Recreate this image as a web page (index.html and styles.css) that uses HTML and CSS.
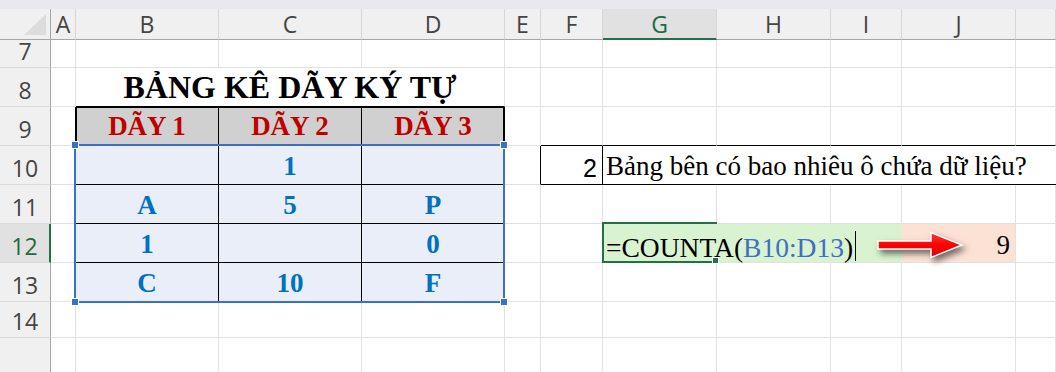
FILE: index.html
```html
<!DOCTYPE html>
<html lang="vi">
<head>
<meta charset="utf-8">
<title>COUNTA</title>
<link rel="stylesheet" href="styles.css">
</head>
<body>
<div class="topbar"></div>
<div class="sheet">
  <div class="corner"><span class="tri"></span></div>
  <div class="ch">A</div><div class="ch">B</div><div class="ch">C</div><div class="ch">D</div><div class="ch">E</div><div class="ch">F</div><div class="ch sel">G</div><div class="ch">H</div><div class="ch">I</div><div class="ch">J</div><div class="ch"></div>

  <div class="rh">7</div>
  <div class="c"></div><div class="c"></div><div class="c"></div><div class="c"></div><div class="c"></div><div class="c"></div><div class="c"></div><div class="c"></div><div class="c"></div><div class="c"></div><div class="c"></div>

  <div class="rh">8</div>
  <div class="c"></div>
  <div class="c title">BẢNG KÊ DÃY KÝ TỰ</div>
  <div class="c"></div><div class="c"></div><div class="c"></div><div class="c"></div><div class="c"></div><div class="c"></div><div class="c"></div>

  <div class="rh">9</div>
  <div class="c a9"></div>
  <div class="tbl">
    <div class="th first">DÃY 1</div><div class="th">DÃY 2</div><div class="th last">DÃY 3</div>
    <div class="td"></div><div class="td">1</div><div class="td"></div>
    <div class="td">A</div><div class="td">5</div><div class="td">P</div>
    <div class="td">1</div><div class="td"></div><div class="td">0</div>
    <div class="td">C</div><div class="td">10</div><div class="td">F</div>
    <div class="selbox"><i class="h tl"></i><i class="h tr"></i><i class="h bl"></i><i class="h br"></i></div>
  </div>
  <div class="c"></div>
  <div class="c bb"></div><div class="c bb"></div><div class="c bb"></div><div class="c bb"></div><div class="c bb"></div><div class="c bb"></div>

  <div class="rh">10</div>
  <div class="c"></div>
  <div class="c e10"></div>
  <div class="c f10">2</div>
  <div class="c q">Bảng bên có bao nhiêu ô chứa dữ liệu?</div>

  <div class="rh">11</div>
  <div class="c"></div>
  <div class="c"></div><div class="c"></div><div class="c"></div><div class="c"></div><div class="c"></div><div class="c"></div><div class="c"></div>

  <div class="rh sel">12</div>
  <div class="c"></div>
  <div class="c"></div><div class="c"></div>
  <div class="c edit">=COUNTA(<span class="ref">B10:D13</span>)<span class="caret"></span><span class="active"></span></div>
  <div class="c res">9</div>
  <div class="c"></div>

  <div class="rh">13</div>
  <div class="c"></div>
  <div class="c"></div><div class="c"></div><div class="c"></div><div class="c"></div><div class="c"></div><div class="c"></div><div class="c"></div>

  <div class="rh">14</div>
  <div class="c"></div><div class="c"></div><div class="c"></div><div class="c"></div><div class="c"></div><div class="c"></div><div class="c"></div><div class="c"></div><div class="c"></div><div class="c"></div><div class="c"></div>

  <div class="rh"></div>
  <div class="c"></div><div class="c"></div><div class="c"></div><div class="c"></div><div class="c"></div><div class="c"></div><div class="c"></div><div class="c"></div><div class="c"></div><div class="c"></div><div class="c"></div>

  <svg class="arrow" width="96" height="36" viewBox="0 0 96 36" aria-hidden="true">
    <defs>
      <linearGradient id="rg" x1="0" y1="0" x2="0" y2="1">
        <stop offset="0" stop-color="#ff3a3a"/>
        <stop offset="0.5" stop-color="#ff0000"/>
        <stop offset="1" stop-color="#d80000"/>
      </linearGradient>
    </defs>
    <path d="M6 13 H59 V4.5 L90 17 L59 29.5 V21 H6 Z" fill="url(#rg)" stroke="#ffffff" stroke-width="1.5" stroke-linejoin="miter"/>
  </svg>
</div>
</body>
</html>
```

FILE: styles.css
```css
* { box-sizing: border-box; }

html, body {
  margin: 0;
  height: 100%;
  overflow: hidden;
  background: #ffffff;
  font-family: "Liberation Serif", "Times New Roman", serif;
}

.topbar {
  height: 9px;
  background: #e9e9ed;
}

.sheet {
  position: relative;
  display: grid;
  grid-template-columns: 51px 25px 143px 143px 143px 36px 62px 114px 114px 71px 114px 1fr;
  grid-template-rows: 31px 28px 39px 39px 39px 39px 39px 39px 36px 40px;
}

/* headers */
.corner {
  position: relative;
  background: #f0f0f0;
  border-right: 1px solid #a6a6a6;
  border-bottom: 1px solid #a6a6a6;
}
.tri {
  position: absolute;
  right: 4px;
  bottom: 4px;
  width: 22px;
  height: 21px;
  background: #dcdcdc;
  clip-path: polygon(100% 0, 100% 100%, 0 100%);
}

.ch, .rh {
  display: flex;
  justify-content: center;
  align-items: flex-end;
  background: #f0f0f0;
  font-family: "Open Sans", "Liberation Sans", sans-serif;
  font-size: 23px;
  line-height: 1;
  color: #444444;
}
.ch {
  border-right: 1px solid #d6d6d6;
  border-bottom: 1px solid #a6a6a6;
  padding-bottom: 3px;
}
.ch.sel {
  background: #e1e1e1;
  color: #1d6b41;
  border-bottom: 2px solid #217346;
  padding-bottom: 2px;
}
.rh {
  border-right: 1px solid #a6a6a6;
  border-bottom: 1px solid #d9d9d9;
  padding-bottom: 4px;
}
.rh.sel {
  background: #e1e1e1;
  color: #1d6b41;
  border-right: 2px solid #217346;
}

/* cells */
.c {
  display: flex;
  align-items: flex-end;
  border-right: 1px solid #e1e1e1;
  border-bottom: 1px solid #e1e1e1;
  font-size: 27px;
  line-height: 1;
  white-space: nowrap;
  color: #000000;
  padding-bottom: 4px;
}

.title {
  grid-column: span 3;
  justify-content: center;
  font-size: 32px;
  font-weight: bold;
  border-bottom-color: #000000;
  padding-bottom: 3px;
}

.a9 { border-right-color: #000000; }
.bb { border-bottom-color: #000000; }

/* table B9:D13 */
.tbl {
  grid-column: span 3;
  grid-row: span 5;
  position: relative;
  display: grid;
  grid-template-columns: repeat(3, 143px);
  grid-template-rows: repeat(5, 39px);
  font-size: 27px;
  line-height: 1;
  font-weight: bold;
}
.th, .td {
  display: flex;
  justify-content: center;
  align-items: flex-end;
  border-right: 1px solid #000000;
  border-bottom: 1px solid #000000;
}
.th {
  background: #d0d0d0;
  color: #c00000;
  padding-bottom: 5px;
  box-shadow: inset 0 1px 0 #000000;
}
.th.first { box-shadow: inset 0 1px 0 #000000, inset 1px 0 0 #000000; }
.th.last { box-shadow: inset 0 1px 0 #000000, inset -1px 0 0 #000000; }
.td {
  background: #e9eef8;
  color: #0070c0;
  padding-bottom: 4px;
}

.selbox {
  position: absolute;
  left: -2px;
  top: 37px;
  width: 431px;
  height: 159px;
  border: 2px solid #3a6fca;
}
.h {
  position: absolute;
  width: 6px;
  height: 6px;
  background: #3a6fca;
  box-shadow: 0 0 0 1px #ffffff;
}
.h.tl { left: -4px; top: -4px; }
.h.tr { right: -4px; top: -4px; }
.h.bl { left: -4px; bottom: -4px; }
.h.br { right: -4px; bottom: -4px; }

/* question box */
.e10 { border-right-color: #000000; }
.f10 {
  justify-content: flex-end;
  padding-right: 5px;
  padding-bottom: 3px;
  font-family: "Liberation Sans", Arial, sans-serif;
  font-size: 25px;
  border-right-color: #000000;
  border-bottom-color: #000000;
}
.q {
  grid-column: span 5;
  padding-left: 3px;
  border-right: none;
  border-bottom-color: #000000;
}

/* editing cell */
.edit {
  grid-column: span 3;
  position: relative;
  background: #d9f2d0;
  border-right-color: #d9f2d0;
  padding-left: 3px;
  padding-bottom: 1px;
  font-size: 27.5px;
}
.ref { color: #3e6fc6; }
.caret {
  display: inline-block;
  width: 1px;
  height: 30px;
  margin-left: 2px;
  background: #000000;
  vertical-align: -8px;
}
.active {
  position: absolute;
  left: -1px;
  top: -2px;
  width: 115px;
  height: 41px;
  border: 2px solid #217346;
  border-right: none;
}
.active::after {
  content: "";
  position: absolute;
  right: -1px;
  bottom: -2px;
  width: 5px;
  height: 5px;
  background: #217346;
  box-shadow: 0 0 0 1px #ffffff;
}

.res {
  justify-content: flex-end;
  background: #fbe2d5;
  padding-right: 5px;
  padding-bottom: 3px;
}

.arrow {
  position: absolute;
  left: 872px;
  top: 219px;
  overflow: visible;
  filter: drop-shadow(3px 4px 3px rgba(0, 0, 0, 0.55));
}
```
